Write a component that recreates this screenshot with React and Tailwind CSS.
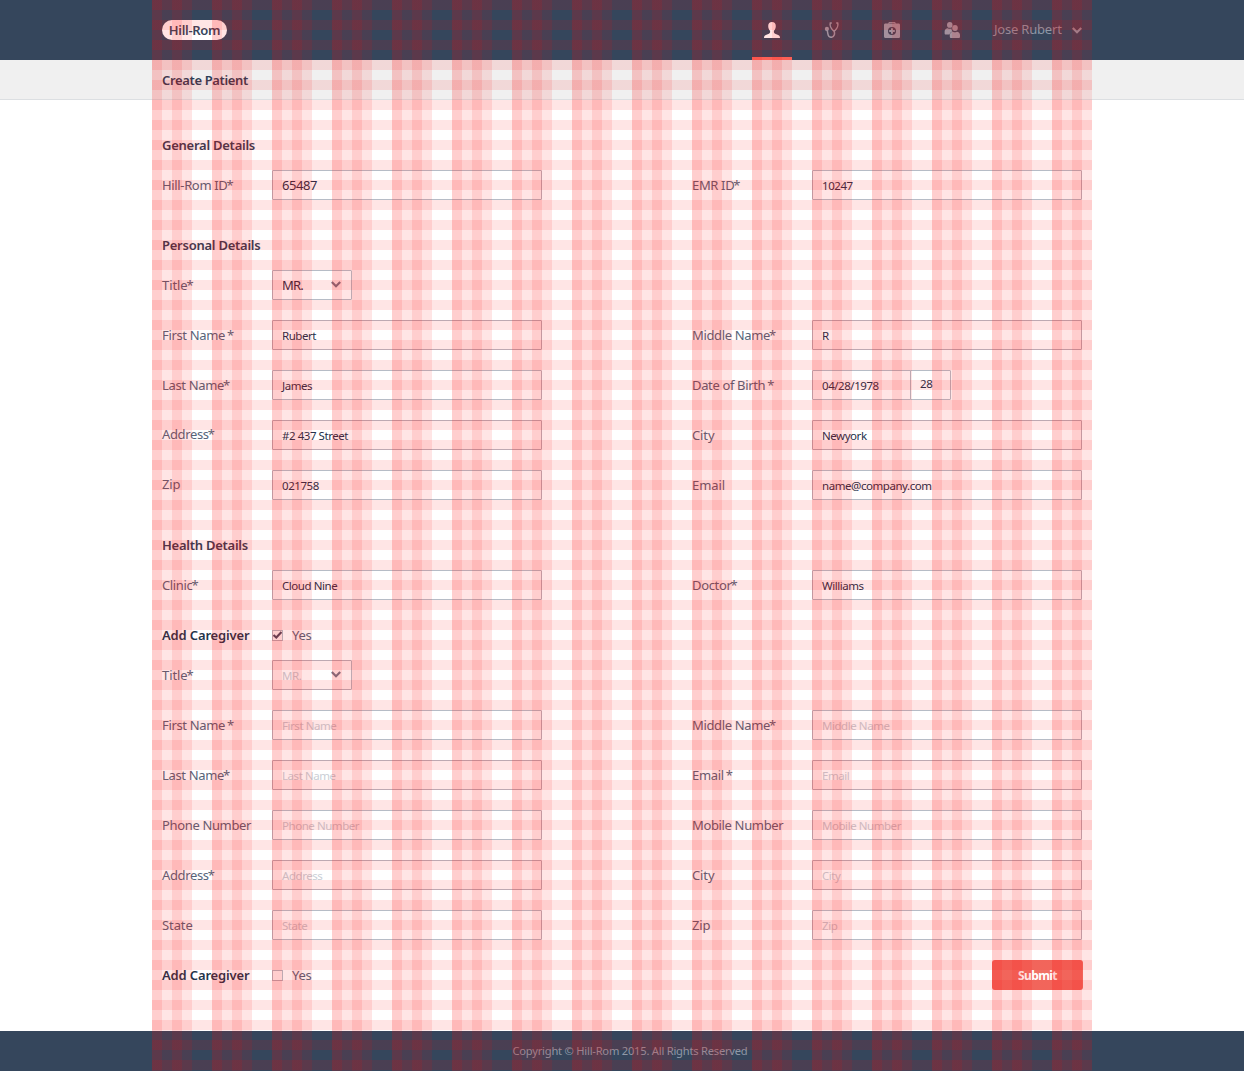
const INPUT = "flex h-[30px] items-center rounded-[1px] border border-[#b6bcc6] pl-[9px] pb-px text-[11.5px] tracking-[-0.45px] leading-none";

function Chevron({ className = "" }) {
  return (
    <svg className={className} width="10" height="7" viewBox="0 0 10 7" fill="none" stroke="currentColor" strokeWidth="2.2">
      <path d="M0.8 1 L5 5.2 L9.2 1" />
    </svg>
  );
}

function UserIcon() {
  return (
    <svg width="16" height="16" viewBox="0 0 16 16" fill="currentColor">
      <path d="M8 0C5.6 0 4.2 1.500 4.200 3.900c0 2 .7 3.900 1.900 4.900v1.500c0 .7-.4 1.100-1.200 1.400L1.800 13C.6 13.500 0 14.400 0 16h16c0-1.600-.6-2.500-1.800-3l-3.100-1.300c-.8-.3-1.200-.7-1.200-1.400V8.800c1.200-1 1.900-2.900 1.900-4.900C11.800 1.500 10.400 0 8 0z" />
    </svg>
  );
}

function StethoscopeIcon() {
  return (
    <svg width="16" height="16" viewBox="0 0 16 16" fill="none" stroke="currentColor" strokeWidth="1.500">
      <path d="M7.800 .9H6.300C5.600 3 7 6.500 9.200 8.500c.5.400 1.300.4 1.800 0 2.100-2 3.400-5.500 2.700-7.600H12.200" />
      <path d="M10.100 8.700c.4 1.500.7 2.700.2 4.100-.5 1.600-1.700 2.500-3.100 2.500-1.800 0-3-1.200-3.300-3.300-.2-1.500-.3-2.500-.8-4" />
      <circle cx="2.900" cy="6.900" r="2.100" fill="currentColor" stroke="none" />
    </svg>
  );
}

function MedkitIcon() {
  return (
    <svg width="16" height="16" viewBox="0 0 16 16">
      <path d="M4.900 2V.6h6.200V2" fill="none" stroke="currentColor" strokeWidth="1" />
      <path fill="currentColor" fillRule="evenodd" d="M1.500 1.500h13c1 0 1.500.6 1.500 1.500v11.500c0 1-.6 1.500-1.500 1.500h-13C.5 16 0 15.400 0 14.500V3c0-1 .6-1.500 1.500-1.500zM8 5a4 4 0 100 8 4 4 0 000-8z" />
      <path d="M8 6.200v5.600M5.200 9h5.600" stroke="currentColor" strokeWidth="2" />
    </svg>
  );
}

function UsersIcon() {
  return (
    <svg width="16" height="16" viewBox="0 0 16 16" fill="currentColor">
      <ellipse cx="5.800" cy="2.900" rx="2.800" ry="2.900" />
      <path d="M.6 9.500C.6 7.500 2 6.400 3.800 6.200c1 .8 2.400.9 3.500.1.200 1.600.7 2.600 1.500 3.300-1.600.2-2.800 1.200-3.200 3H2C.9 12.600.6 12 .6 11z" />
      <ellipse cx="11" cy="6" rx="2.800" ry="3" />
      <path d="M5.800 13c0-2 1.400-3.100 3.200-3.300 1.100.8 2.700.8 3.800 0 1.800.2 3.200 1.300 3.200 3.300v1.500c0 1-.5 1.500-1.500 1.500H7.300c-1 0-1.500-.5-1.500-1.500z" />
    </svg>
  );
}

function Heading({ children }) {
  return <h2 className="flex h-[30px] items-center text-[13px] font-semibold tracking-[-0.25px] text-[#2c3e56]">{children}</h2>;
}

function Value({ value, hint, large }) {
  return (
    <div className={`${INPUT} w-[270px] ${hint ? "text-[#c9ced5]" : "text-[#22304a]"}`}>
      <span className={large ? "pt-[2px] text-[13px]" : "pt-[3px]"}>{value || hint}</span>
    </div>
  );
}

function Pick({ hint }) {
  return (
    <div className={`${INPUT} w-[80px] justify-between pr-[10px]`}>
      <span className={hint ? "pt-[3px] text-[#c9ced5]" : "pt-[2px] text-[13px] tracking-[-0.8px] text-[#22304a]"}>MR.</span>
      <Chevron className="text-[#6f7d90]" />
    </div>
  );
}

function Label({ text, className }) {
  const spacing = text.length > 6 ? "tracking-[-0.35px]" : "tracking-[-0.1px]";
  const starred = text.endsWith("*");
  return (
    <span className={`${className} ${spacing} text-[#56657a]`}>
      {starred ? text.slice(0, -1) : text}
      {starred && <span className="-ml-px">*</span>}
    </span>
  );
}

function Row({ left, right }) {
  return (
    <div className="flex h-[30px] items-center">
      <Label text={left.label} className={left.raise ? "w-[110px] pb-[2px]" : "w-[110px]"} />
      {left.pick ? <Pick hint={left.pick === "hint"} /> : <Value {...left} />}
      {right && (
        <>
          <Label text={right.label} className="ml-[150px] w-[120px]" />
          {right.born ? (
            <div className="flex">
              <div className={`${INPUT} w-[99px] rounded-r-none text-[#22304a]`}><span className="pt-[3px]">04/28/1978</span></div>
              <div className={`${INPUT} -ml-px w-[41px] text-[#22304a]`}><span className="pb-px">28</span></div>
            </div>
          ) : (
            <Value {...right} />
          )}
        </>
      )}
    </div>
  );
}

function Caregiver({ checked, children }) {
  return (
    <div className="flex h-[30px] items-center">
      <span className="w-[110px] text-[13px] font-semibold tracking-[-0.15px] text-[#22344a]">Add Caregiver</span>
      <span className="flex h-[11px] w-[11px] items-center justify-center border border-[#b6bcc6] text-[#4a4c62]">
        {checked && (
          <svg width="9" height="8" viewBox="0 0 9 8" className="shrink-0" fill="none" stroke="currentColor" strokeWidth="2.200">
            <path d="M.5 4 L3.300 6.500 L8.500 1" />
          </svg>
        )}
      </span>
      <span className="ml-[9px] tracking-[-0.3px] text-[#56657a]">Yes</span>
      {children}
    </div>
  );
}

const personal = [
  [{ label: "First Name *", value: "Rubert" }, { label: "Middle Name*", value: "R" }],
  [{ label: "Last Name*", value: "James" }, { label: "Date of Birth *", born: true }],
  [{ label: "Address*", value: "#2 437 Street", raise: true }, { label: "City", value: "Newyork" }],
  [{ label: "Zip", value: "021758", raise: true }, { label: "Email", value: "name@company.com" }],
];

const caregiver = [
  [{ label: "First Name *", hint: "First Name" }, { label: "Middle Name*", hint: "Middle Name" }],
  [{ label: "Last Name*", hint: "Last Name" }, { label: "Email *", hint: "Email" }],
  [{ label: "Phone Number", hint: "Phone Number" }, { label: "Mobile Number", hint: "Mobile Number" }],
  [{ label: "Address*", hint: "Address" }, { label: "City", hint: "City" }],
  [{ label: "State", hint: "State" }, { label: "Zip", hint: "Zip" }],
];

const nav = [UserIcon, StethoscopeIcon, MedkitIcon, UsersIcon];

export default function App() {
  return (
    <div className="relative flex h-[1071px] w-[1244px] flex-col overflow-hidden bg-white font-['Noto_Sans','Open_Sans',sans-serif] text-[13px] leading-[18px] whitespace-nowrap">
      <header className="h-[60px] bg-[#35465c]">
        <div className="mx-auto flex h-full w-[920px] items-center">
          <div className="flex h-5 w-[65px] items-center justify-center rounded-full bg-white text-[13px] font-semibold tracking-[-0.3px] text-[#35465c]">Hill-Rom</div>
          <nav className="ml-auto flex h-full gap-5">
            {nav.map((Icon, i) => (
              <a key={i} className={`flex h-full w-10 items-center justify-center border-b-[3px] pt-[3px] ${i === 0 ? "border-[#fb6b60] text-white" : "border-transparent text-[#99a2b0]"}`}>
                <Icon />
              </a>
            ))}
          </nav>
          <div className="ml-[22px] flex w-[88px] items-center justify-between text-[#8f99a8]">
            <span className="pb-[2px] tracking-[-0.2px]">Jose Rubert</span>
            <Chevron />
          </div>
        </div>
      </header>
      <div className="h-10 border-b border-[#dcdfe2] bg-[#f0f0f0]">
        <h1 className="mx-auto flex h-10 w-[920px] items-center text-[13px] font-semibold tracking-[-0.35px] text-[#2c3e56]">Create Patient</h1>
      </div>
      <main className="mx-auto flex w-[920px] grow flex-col pt-[30px]">
        <Heading>General Details</Heading>
        <div className="mt-[10px] mb-[30px]">
          <Row left={{ label: "Hill-Rom ID*", value: "65487", large: true }} right={{ label: "EMR ID*", value: "10247" }} />
        </div>
        <Heading>Personal Details</Heading>
        <div className="mt-[10px] mb-[30px] flex flex-col gap-5">
          <Row left={{ label: "Title*", pick: "value" }} />
          {personal.map(([l, r]) => <Row key={l.label} left={l} right={r} />)}
        </div>
        <Heading>Health Details</Heading>
        <div className="mt-[10px] mb-5">
          <Row left={{ label: "Clinic*", value: "Cloud Nine" }} right={{ label: "Doctor*", value: "Williams" }} />
        </div>
        <Caregiver checked />
        <div className="mt-[10px] mb-5 flex flex-col gap-5">
          <Row left={{ label: "Title*", pick: "hint" }} />
          {caregiver.map(([l, r]) => <Row key={l.label} left={l} right={r} />)}
        </div>
        <Caregiver>
          <button className="mr-[-1px] ml-auto h-[30px] w-[91px] rounded-[3px] bg-[#f07065] pt-[2px] text-[12px] font-bold tracking-[-0.6px] text-white">Submit</button>
        </Caregiver>
      </main>
      <footer className="flex h-10 items-center bg-[#35465c]">
        <p className="w-full pl-4 text-center text-[11.2px] tracking-[-0.24px] text-[#8f99a8]">Copyright © Hill-Rom 2015. All Rights Reserved</p>
      </footer>
      <div className="pointer-events-none absolute inset-y-0 left-[152px] w-[940px] bg-[repeating-linear-gradient(90deg,rgba(255,0,0,0.1)_0_40px,transparent_40px_60px),repeating-linear-gradient(90deg,rgba(255,0,0,0.1)_0_10px,transparent_10px_20px,rgba(255,0,0,0.1)_20px_30px,transparent_30px_60px),repeating-linear-gradient(180deg,rgba(255,0,0,0.1)_0_10px,transparent_10px_20px)]" />
    </div>
  );
}
